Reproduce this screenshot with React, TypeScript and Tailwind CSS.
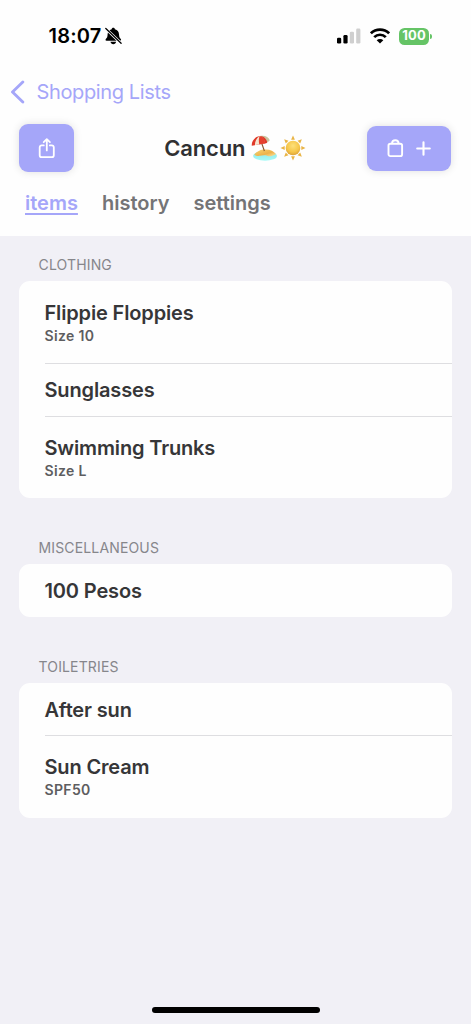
import type { ReactNode } from "react";

type Item = { name: string; note?: string };
type Section = { title: string; items: Item[] };

const sections: Section[] = [
  {
    title: "CLOTHING",
    items: [
      { name: "Flippie Floppies", note: "Size 10" },
      { name: "Sunglasses" },
      { name: "Swimming Trunks", note: "Size L" },
    ],
  },
  { title: "MISCELLANEOUS", items: [{ name: "100 Pesos" }] },
  {
    title: "TOILETRIES",
    items: [{ name: "After sun" }, { name: "Sun Cream", note: "SPF50" }],
  },
];

const tabs = ["items", "history", "settings"];

const BellOff = () => (
  <svg width="17" height="18" viewBox="0 0 17 18" className="ml-[4px]">
    <path
      d="M8.3 .8c1 0 1.5.6 1.6 1.4 2.6.7 4 2.5 4.1 5 .1 2.8.7 3.4 1.6 4.5.9 1 .5 2-.6 2H1.6c-1.1 0-1.5-1-.6-2 1-1.1 1.5-1.7 1.6-4.5.1-2.5 1.5-4.3 4.1-5 .1-.8.6-1.4 1.6-1.4z"
      fill="#000"
    />
    <path d="M5.5 14.7h5.6c-.2 1.5-1.3 2.5-2.8 2.5s-2.6-1-2.8-2.5z" fill="#000" />
    <path d="M.6 1.4 16.3 16.6" stroke="#fff" strokeWidth="2.8" />
    <path d="M.8 1.5 16.1 16.3" stroke="#000" strokeWidth="1.3" strokeLinecap="round" />
  </svg>
);

const Signal = () => (
  <svg width="24" height="16" viewBox="0 0 24 16">
    <rect x="0" y="9.7" width="4.2" height="5.8" rx="1.3" />
    <rect x="6.4" y="7" width="4.2" height="8.5" rx="1.3" />
    <rect x="12.8" y="3.8" width="4.2" height="11.7" rx="1.3" fill="#cfcfcf" />
    <rect x="19.2" y="0.5" width="4.2" height="15" rx="1.3" fill="#cfcfcf" />
  </svg>
);

const Wifi = () => (
  <svg width="20" height="16" viewBox="0 0 20 16" fill="none" stroke="#000" strokeWidth="2.7">
    <path d="M.9 5.3a13 13 0 0 1 18.2 0" />
    <path d="M4.2 9.1a8.3 8.3 0 0 1 11.6 0" />
    <path d="M10 15.6 6.7 12.3a4.7 4.7 0 0 1 6.6 0z" fill="#000" stroke="none" />
  </svg>
);

const Battery = () => (
  <div className="flex items-center">
    <div className="flex h-[17px] w-[30px] items-center justify-center rounded-[5.5px] bg-[#65c466] text-[13px] font-bold tracking-[0.2px] text-white">
      100
    </div>
    <div className="ml-px h-[5px] w-[2px] rounded-r-full bg-[#65c466]" />
  </div>
);

const ShareIcon = () => (
  <svg
    width="18"
    height="22"
    viewBox="0 0 18 22"
    fill="none"
    stroke="#fff"
    strokeWidth="1.8"
    strokeLinecap="round"
    strokeLinejoin="round"
  >
    <path d="M5.8 8.4H3.7a2 2 0 0 0-2 2v7.8a2 2 0 0 0 2 2h10.1a2 2 0 0 0 2-2v-7.8a2 2 0 0 0-2-2h-2" />
    <path d="M8.8 13.4V2.6M5.7 5.2l3.1-3 3.1 3" />
  </svg>
);

const BagIcon = () => (
  <svg width="17" height="19" viewBox="0 0 17 19" fill="none" stroke="#fff" strokeWidth="1.9">
    <rect x="1.5" y="4.7" width="13.6" height="12.4" rx="1.9" />
    <path d="M5 4.5C5.1 2.5 6.3 1.2 8.3 1.2s3.2 1.3 3.3 3.3" />
  </svg>
);

const PlusIcon = () => (
  <svg width="15" height="15" viewBox="0 0 15 15" stroke="#fff" strokeWidth="2.1" strokeLinecap="round">
    <path d="M7.5 1.2v12.6M1.2 7.5h12.6" />
  </svg>
);

const Beach = () => (
  <svg width="27" height="27" viewBox="0 0 27 27">
    <defs>
      <linearGradient id="sea" x1="0" y1="0" x2="0" y2="1">
        <stop offset="0" stopColor="#8be5e6" />
        <stop offset="1" stopColor="#a9faf7" />
      </linearGradient>
      <linearGradient id="sand" x1="0" y1="0" x2="1" y2="1">
        <stop offset="0" stopColor="#f6d675" />
        <stop offset="0.6" stopColor="#edb24a" />
        <stop offset="1" stopColor="#fae5a2" />
      </linearGradient>
    </defs>
    <ellipse cx="14" cy="20.9" rx="11.9" ry="4.9" fill="url(#sea)" />
    <path d="M3.3 19.4c2.5-3 5.8-5.1 11.4-5 5 0 8.1 2 10.2 4.7-2.6 2.2-6.1 2.6-8.8 1.6-2.8-1-4.7-.2-7.2.1-2.2.3-4.3-.1-5.6-1.4z" fill="url(#sand)" />
    <path d="M10.8 8.5 13.4 16" stroke="#8a572e" strokeWidth="1.1" />
    {/* Parasol, its panels from back to front */}
    <path d="M8.7 1.1c4.9-1.2 9 .9 10.1 4.1-.9 1.2-2.1 2.1-3.6 2.6z" fill="#c9c39f" />
    <path d="M.8 10.8C.3 6 3.7 1.8 8.7 1.1c3.9.1 6.6 2.6 7.6 6.4-.7.5-1.5.9-2.5 1.1-2.7.3-5.5.6-8.4 1.2z" fill="#df3829" />
    <path d="M3.9 10.2C3.8 6.7 5.5 3 8.7 1.1c2.9.9 4.8 3.6 5.2 7.5-2.7.3-6.2.8-10 1.6z" fill="#f5e4cf" />
    <path d="M8.3 9.4c-.8-3-.6-6.4.4-8.3 3.4.9 5.2 3.6 5.5 7.4z" fill="#e5412f" />
  </svg>
);

const Sun = () => (
  <svg width="26" height="26" viewBox="-13 -13 26 26">
    <defs>
      <radialGradient id="disc" cx="0.5" cy="0.35" r="0.65">
        <stop offset="0" stopColor="#fde07a" />
        <stop offset="0.65" stopColor="#f6c649" />
        <stop offset="1" stopColor="#dca23a" />
      </radialGradient>
    </defs>
    {[0, 45, 90, 135, 180, 225, 270, 315].map((angle) => (
      <path key={angle} d="M0-12.5 1.9-8.3H-1.9z" fill="#e9b445" transform={`rotate(${angle})`} />
    ))}
    <circle r="7.3" fill="url(#disc)" />
  </svg>
);

const StatusBar = () => (
  <div className="flex h-[72px] items-center justify-between pr-[39px] pl-[48.5px]">
    <div className="flex items-center">
      <span className="text-[20px] font-semibold tracking-[0.2px] text-black">18:07</span>
      <BellOff />
    </div>
    <div className="flex items-center">
      <Signal />
      <div className="ml-[9px] mr-[9px]">
        <Wifi />
      </div>
      <Battery />
    </div>
  </div>
);

const ActionButton = ({ label, className, children }: { label: string; className: string; children: ReactNode }) => (
  <button
    aria-label={label}
    className={`flex items-center justify-center rounded-[9px] bg-[#a5a6f9] shadow-[0_0_9px_rgba(0,0,0,0.12)] ${className}`}
  >
    {children}
  </button>
);

const ListSection = ({ title, items }: Section) => (
  <section>
    <h2 className="h-5 pl-[19.5px] text-[14px] leading-5 tracking-[0.15px] text-[#86868b]">{title}</h2>
    <ul className="mt-[6px] overflow-hidden rounded-[11px] bg-[#fefefe] pl-[25.5px]">
      {items.map((item, index) => (
        <li
          key={item.name}
          className={`${item.note ? "h-[82.4px]" : "h-[52.4px]"} ${
            index > 0 ? "border-t border-[#dedee1]" : ""
          } ${item.note ? (index > 0 ? "pt-[19px]" : "pt-[20px]") : index > 0 ? "pt-[14px]" : "pt-[15px]"}`}
        >
          <p className="text-[20px] leading-6 font-[580] tracking-[-0.15px] text-[#363638]">{item.name}</p>
          {item.note && (
            <p className="mt-[2px] text-[14px] leading-[17px] font-[580] tracking-[0.35px] text-[#5d5d60]">
              {item.note}
            </p>
          )}
        </li>
      ))}
    </ul>
  </section>
);

const App = () => {
  return (
    <div className="flex h-[1024px] w-[471px] flex-col overflow-hidden bg-[#f1f0f6] font-['Inter','Liberation_Sans',sans-serif]">
      <header className="h-[236px] bg-[#fefefe]">
        <StatusBar />

        {/* Back link */}
        <div className="flex h-10 items-center pl-[10px] text-[#a5a6f9]">
          <svg
            width="15"
            height="24"
            viewBox="0 0 15 24"
            fill="none"
            stroke="currentColor"
            strokeWidth="2.9"
            strokeLinecap="round"
            strokeLinejoin="round"
          >
            <path d="M12.8 2 2.5 12l10.3 10" />
          </svg>
          <span className="ml-[11.5px] text-[20px] tracking-[-0.37px]">Shopping Lists</span>
        </div>

        {/* Title row */}
        <div className="flex h-[72px] items-center justify-between pr-[19.5px] pl-[19px]">
          <ActionButton label="Share" className="h-12 w-[55px]">
            <ShareIcon />
          </ActionButton>
          <div className="ml-[29px] flex items-center">
            <h1 className="mr-[6px] text-[22px] font-[580] tracking-[-0.2px] text-[#303032]">Cancun</h1>
            <Beach />
            <div className="ml-[2px]">
              <Sun />
            </div>
          </div>
          <ActionButton label="Add item" className="h-[45px] w-[84px] gap-[12px]">
            <BagIcon />
            <PlusIcon />
          </ActionButton>
        </div>

        <nav className="flex h-[38px] items-center gap-6 pl-[25px] text-[20px] font-[580] text-[#747476]">
          {tabs.map((tab, index) => (
            <a
              key={tab}
              className={index === 0 ? "text-[#a5a6f9] underline decoration-2 underline-offset-[3px]" : ""}
            >
              {tab}
            </a>
          ))}
        </nav>
      </header>

      <main className="flex flex-1 flex-col gap-[40.2px] pt-[19px] pr-[19.5px] pl-[19px]">
        {sections.map((section) => (
          <ListSection key={section.title} {...section} />
        ))}
      </main>

      {/* Home indicator */}
      <div className="mb-[11px] flex justify-center">
        <div className="h-[6px] w-[168px] rounded-full bg-black" />
      </div>
    </div>
  );
};

export default App;
